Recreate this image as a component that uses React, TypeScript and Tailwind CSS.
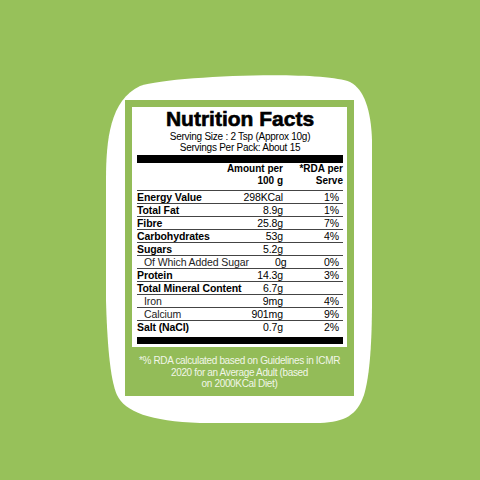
import React from 'react';

type Row = { label: string; amount: string; rda: string; bold: boolean };

const rows: Row[] = [
    { label: 'Energy Value', amount: '298KCal', rda: '1%', bold: true },
    { label: 'Total Fat', amount: '8.9g', rda: '1%', bold: true },
    { label: 'Fibre', amount: '25.8g', rda: '7%', bold: true },
    { label: 'Carbohydrates', amount: '53g', rda: '4%', bold: true },
    { label: 'Sugars', amount: '5.2g', rda: '', bold: true },
    { label: 'Of Which Added Sugar', amount: '0g', rda: '0%', bold: false },
    { label: 'Protein', amount: '14.3g', rda: '3%', bold: true },
    { label: 'Total Mineral Content', amount: '6.7g', rda: '', bold: true },
    { label: 'Iron', amount: '9mg', rda: '4%', bold: false },
    { label: 'Calcium', amount: '901mg', rda: '9%', bold: false },
    { label: 'Salt (NaCl)', amount: '0.7g', rda: '2%', bold: true },
];

export default function App() {
    return (
        <div className="relative w-[480px] h-[480px] overflow-hidden bg-[#97c15a] font-['Liberation_Sans',Arial,sans-serif]">
            {/* white blob behind the label */}
            <svg className="absolute inset-0" width="480" height="480" viewBox="0 0 480 480">
                <path
                    d="M140 86 C170 76 320 70 350 82 C364 89 371 110 372 140 L372 300 C372 340 370 375 364 395 C357 415 345 422 320 423 L200 423 C150 421 125 412 117 395 C110 380 107 340 106 300 L106 180 C106 140 110 100 140 86 Z"
                    fill="#ffffff"
                />
            </svg>

            <div className="relative pt-[100px] pl-[125px]">
                {/* LABEL */}
                <div className="w-[229px] bg-[#93bc58] px-[7px] pt-[7px]">
                    <div className="bg-white pl-[5px] pr-[4px] pb-[3px] text-black">
                        <h1 className="text-center text-[21px] leading-[24px] font-bold [-webkit-text-stroke:0.6px_black]">
                            Nutrition Facts
                        </h1>
                        <p className="text-center text-[10px] leading-[11px] tracking-[-0.25px] whitespace-nowrap">Serving Size : 2 Tsp (Approx 10g)</p>
                        <p className="text-center text-[10px] leading-[11px] tracking-[-0.25px] whitespace-nowrap">Servings Per Pack: About 15</p>
                        <div className="mt-[2px] h-[8px] bg-black"></div>

                        {/* CABECERA */}
                        <div className="flex text-[10px] leading-[12px] font-bold pb-[3px]">
                            <div className="flex-1"></div>
                            <div className="w-[70px] text-right">Amount per<br />100 g</div>
                            <div className="w-[60px] text-right">*RDA per<br />Serve</div>
                        </div>

                        {rows.map((r) => (
                            <div key={r.label} className="flex h-[13px] border-t border-[#444] text-[10.5px] leading-[12px] whitespace-nowrap tracking-[-0.1px]">
                                <div className={r.bold ? 'flex-1 font-bold' : 'flex-1 pl-[7px] text-[#222]'}>{r.label}</div>
                                <div className="w-[40px] text-right">{r.amount}</div>
                                <div className="w-[60px] text-right pr-[4px]">{r.rda}</div>
                            </div>
                        ))}

                        <div className="mt-[4px] h-[7px] bg-black"></div>
                    </div>

                    {/* FOOTER */}
                    <div className="pt-[8px] pb-[6px] text-center text-[10px] leading-[11.5px] tracking-[-0.35px] whitespace-nowrap text-[#f1f6e8]">
                        *% RDA calculated based on Guidelines in ICMR<br />
                        2020 for an Average Adult (based<br />
                        on 2000KCal Diet)
                    </div>
                </div>
            </div>
        </div>
    );
}
